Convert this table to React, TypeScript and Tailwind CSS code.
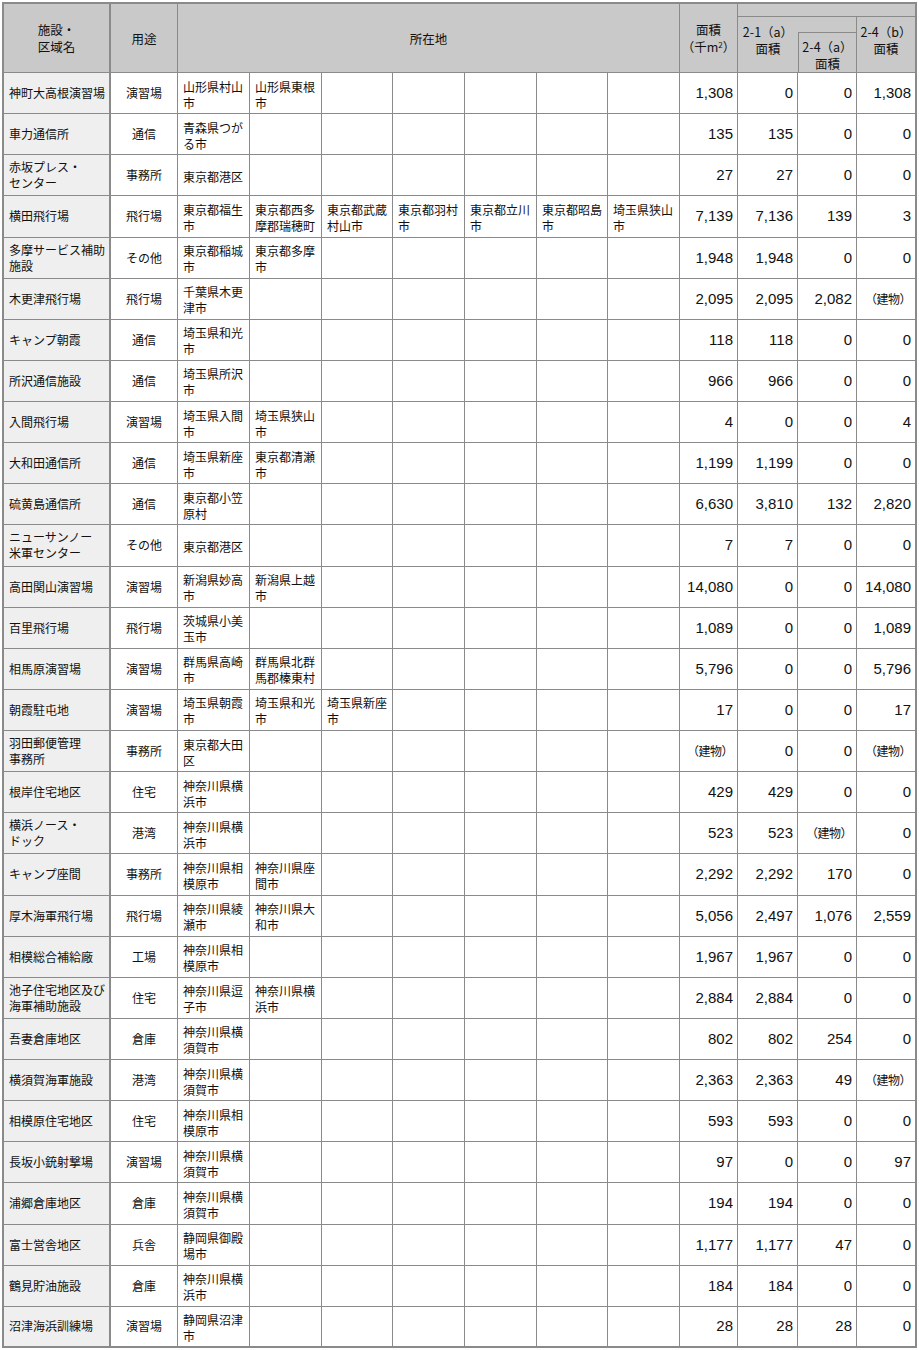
const cols =
  "grid-cols-[109px_67px_72px_72px_71px_72px_72px_71px_72px_58px_60px_59px_60px]";

const jp = "font-['Noto_Sans_CJK_JP','Noto_Sans',sans-serif]";
const num = "font-['Liberation_Sans',Arial,sans-serif]";

const headBg = "bg-[#c9c9c9]";
const line = "border-[#8a8a8a]";

type Row = {
  name: string;
  use: string;
  places: string[];
  area: string;
  a21: string;
  a24a: string;
  a24b: string;
};

const rows: Row[] = [
  { name: "神町大高根演習場", use: "演習場", places: ["山形県村山市", "山形県東根市"], area: "1,308", a21: "0", a24a: "0", a24b: "1,308" },
  { name: "車力通信所", use: "通信", places: ["青森県つがる市"], area: "135", a21: "135", a24a: "0", a24b: "0" },
  { name: "赤坂プレス・\nセンター", use: "事務所", places: ["東京都港区"], area: "27", a21: "27", a24a: "0", a24b: "0" },
  {
    name: "横田飛行場",
    use: "飛行場",
    places: ["東京都福生市", "東京都西多摩郡瑞穂町", "東京都武蔵村山市", "東京都羽村市", "東京都立川市", "東京都昭島市", "埼玉県狭山市"],
    area: "7,139",
    a21: "7,136",
    a24a: "139",
    a24b: "3",
  },
  { name: "多摩サービス補助\n施設", use: "その他", places: ["東京都稲城市", "東京都多摩市"], area: "1,948", a21: "1,948", a24a: "0", a24b: "0" },
  { name: "木更津飛行場", use: "飛行場", places: ["千葉県木更津市"], area: "2,095", a21: "2,095", a24a: "2,082", a24b: "（建物）" },
  { name: "キャンプ朝霞", use: "通信", places: ["埼玉県和光市"], area: "118", a21: "118", a24a: "0", a24b: "0" },
  { name: "所沢通信施設", use: "通信", places: ["埼玉県所沢市"], area: "966", a21: "966", a24a: "0", a24b: "0" },
  { name: "入間飛行場", use: "演習場", places: ["埼玉県入間市", "埼玉県狭山市"], area: "4", a21: "0", a24a: "0", a24b: "4" },
  { name: "大和田通信所", use: "通信", places: ["埼玉県新座市", "東京都清瀬市"], area: "1,199", a21: "1,199", a24a: "0", a24b: "0" },
  { name: "硫黄島通信所", use: "通信", places: ["東京都小笠原村"], area: "6,630", a21: "3,810", a24a: "132", a24b: "2,820" },
  { name: "ニューサンノー\n米軍センター", use: "その他", places: ["東京都港区"], area: "7", a21: "7", a24a: "0", a24b: "0" },
  { name: "高田関山演習場", use: "演習場", places: ["新潟県妙高市", "新潟県上越市"], area: "14,080", a21: "0", a24a: "0", a24b: "14,080" },
  { name: "百里飛行場", use: "飛行場", places: ["茨城県小美玉市"], area: "1,089", a21: "0", a24a: "0", a24b: "1,089" },
  { name: "相馬原演習場", use: "演習場", places: ["群馬県高崎市", "群馬県北群馬郡榛東村"], area: "5,796", a21: "0", a24a: "0", a24b: "5,796" },
  { name: "朝霞駐屯地", use: "演習場", places: ["埼玉県朝霞市", "埼玉県和光市", "埼玉県新座市"], area: "17", a21: "0", a24a: "0", a24b: "17" },
  { name: "羽田郵便管理\n事務所", use: "事務所", places: ["東京都大田区"], area: "（建物）", a21: "0", a24a: "0", a24b: "（建物）" },
  { name: "根岸住宅地区", use: "住宅", places: ["神奈川県横浜市"], area: "429", a21: "429", a24a: "0", a24b: "0" },
  { name: "横浜ノース・\nドック", use: "港湾", places: ["神奈川県横浜市"], area: "523", a21: "523", a24a: "（建物）", a24b: "0" },
  { name: "キャンプ座間", use: "事務所", places: ["神奈川県相模原市", "神奈川県座間市"], area: "2,292", a21: "2,292", a24a: "170", a24b: "0" },
  { name: "厚木海軍飛行場", use: "飛行場", places: ["神奈川県綾瀬市", "神奈川県大和市"], area: "5,056", a21: "2,497", a24a: "1,076", a24b: "2,559" },
  { name: "相模総合補給廠", use: "工場", places: ["神奈川県相模原市"], area: "1,967", a21: "1,967", a24a: "0", a24b: "0" },
  { name: "池子住宅地区及び\n海軍補助施設", use: "住宅", places: ["神奈川県逗子市", "神奈川県横浜市"], area: "2,884", a21: "2,884", a24a: "0", a24b: "0" },
  { name: "吾妻倉庫地区", use: "倉庫", places: ["神奈川県横須賀市"], area: "802", a21: "802", a24a: "254", a24b: "0" },
  { name: "横須賀海軍施設", use: "港湾", places: ["神奈川県横須賀市"], area: "2,363", a21: "2,363", a24a: "49", a24b: "（建物）" },
  { name: "相模原住宅地区", use: "住宅", places: ["神奈川県相模原市"], area: "593", a21: "593", a24a: "0", a24b: "0" },
  { name: "長坂小銃射撃場", use: "演習場", places: ["神奈川県横須賀市"], area: "97", a21: "0", a24a: "0", a24b: "97" },
  { name: "浦郷倉庫地区", use: "倉庫", places: ["神奈川県横須賀市"], area: "194", a21: "194", a24a: "0", a24b: "0" },
  { name: "富士営舎地区", use: "兵舎", places: ["静岡県御殿場市"], area: "1,177", a21: "1,177", a24a: "47", a24b: "0" },
  { name: "鶴見貯油施設", use: "倉庫", places: ["神奈川県横浜市"], area: "184", a21: "184", a24a: "0", a24b: "0" },
  { name: "沼津海浜訓練場", use: "演習場", places: ["静岡県沼津市"], area: "28", a21: "28", a24a: "28", a24b: "0" },
];

function NumCell({ value, last, bottom }: { value: string; last?: boolean; bottom: string }) {
  const isText = value.startsWith("（");
  return (
    <div
      className={`flex items-center justify-end pr-[4px] ${line} ${bottom} ${
        last ? "border-r-2" : "border-r"
      } ${isText ? `${jp} text-[12px] tracking-[-0.04em]` : `${num} text-[15px]`}`}
    >
      {value}
    </div>
  );
}

export default function App() {
  return (
    <div className={`min-h-screen bg-white px-[2px] pt-[2px] text-[#111] ${jp}`}>
      {/* header */}
      <div className={`grid ${cols} grid-rows-[15px_15px_41px] text-[12.5px] leading-[17px]`}>
        <div
          className={`col-start-1 row-start-1 row-span-3 flex items-center justify-center whitespace-pre-line border-t-2 border-l-2 border-r-2 border-b text-center ${line} ${headBg}`}
        >
          {"施設・\n区域名"}
        </div>
        <div
          className={`col-start-2 row-start-1 row-span-3 flex items-center justify-center border-t-2 border-r border-b ${line} ${headBg}`}
        >
          用途
        </div>
        <div
          className={`col-start-3 col-span-7 row-start-1 row-span-3 flex items-center justify-center border-t-2 border-r border-b ${line} ${headBg}`}
        >
          所在地
        </div>
        <div
          className={`col-start-10 row-start-1 row-span-3 flex items-center justify-center whitespace-pre-line border-t-2 border-r border-b text-center ${line} ${headBg}`}
        >
          <span>
            面積
            <br />
            （千m<sup className="text-[8px]">2</sup>）
          </span>
        </div>
        <div className={`col-start-11 col-span-3 row-start-1 border-t-2 border-r-2 border-b ${line} ${headBg}`} />
        <div
          className={`col-start-11 row-start-2 row-span-2 whitespace-pre-line border-b pt-[6px] text-center ${line} ${headBg}`}
        >
          {"2-1（a）\n面積"}
        </div>
        <div className={`col-start-12 row-start-2 border-r ${line} ${headBg}`} />
        <div
          className={`col-start-12 row-start-3 whitespace-pre-line border-t border-l border-r border-b pt-[5px] text-center ${line} ${headBg}`}
        >
          {"2-4（a）\n面積"}
        </div>
        <div
          className={`col-start-13 row-start-2 row-span-2 whitespace-pre-line border-r-2 border-b pt-[6px] text-center ${line} ${headBg}`}
        >
          {"2-4（b）\n面積"}
        </div>
      </div>

      {/* body */}
      <div className={`grid ${cols} auto-rows-[41.13px] text-[12px] leading-[16px]`}>
        {rows.map((r, i) => {
          const bottom = i === rows.length - 1 ? "border-b-2" : "border-b";
          const places = [...r.places, ...Array(7 - r.places.length).fill("")];
          return [
            <div
              key={`n${i}`}
              className={`flex items-center whitespace-pre-line border-l-2 border-r-2 bg-[#eeefee] pl-[5px] ${line} ${bottom}`}
            >
              {r.name}
            </div>,
            <div key={`u${i}`} className={`flex items-center justify-center border-r ${line} ${bottom}`}>
              {r.use}
            </div>,
            ...places.map((p, j) => (
              <div
                key={`p${i}-${j}`}
                className={`flex items-center border-r pl-[5px] pr-[2px] pt-[3px] ${line} ${bottom}`}
              >
                {p}
              </div>
            )),
            <NumCell key={`a${i}`} value={r.area} bottom={bottom} />,
            <NumCell key={`b${i}`} value={r.a21} bottom={bottom} />,
            <NumCell key={`c${i}`} value={r.a24a} bottom={bottom} />,
            <NumCell key={`d${i}`} value={r.a24b} bottom={bottom} last />,
          ];
        })}
      </div>
    </div>
  );
}
